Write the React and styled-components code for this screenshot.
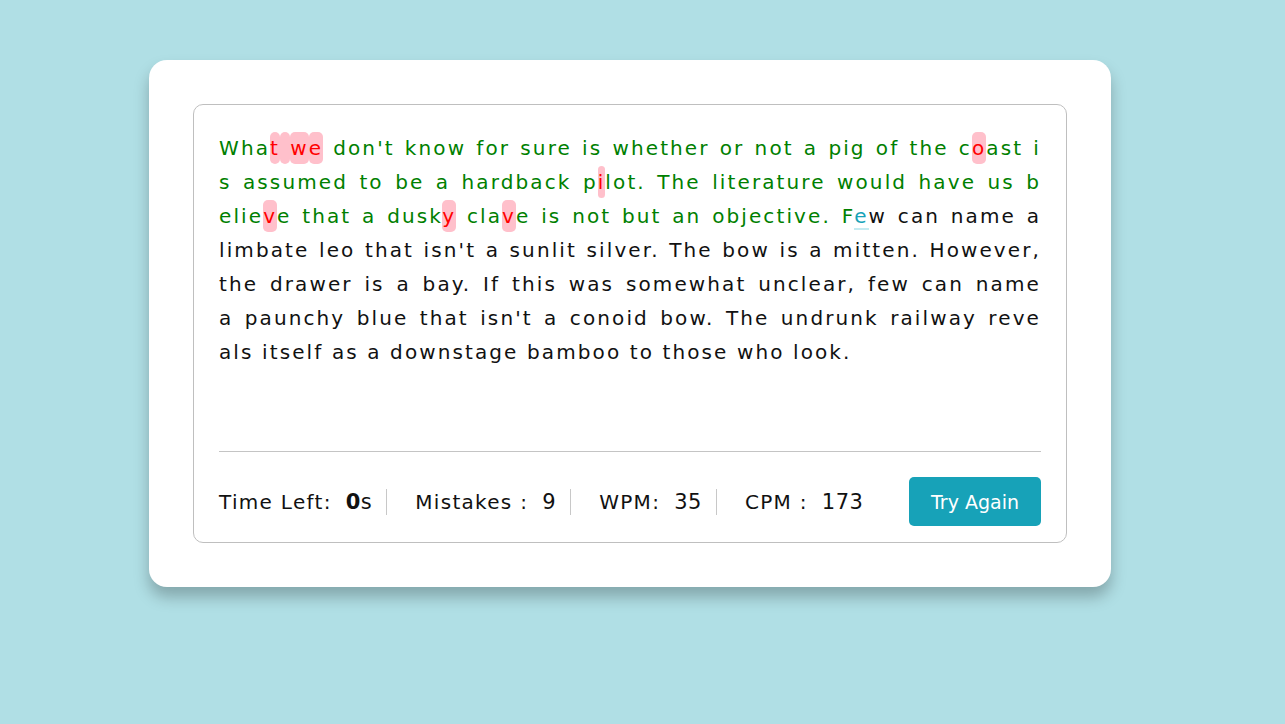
import React from "react";
import styled, { createGlobalStyle } from "styled-components";

const GlobalStyle = createGlobalStyle`
  * { box-sizing: border-box; }
  html, body {
    margin: 0;
    padding: 0;
    background: #b0dfe5;
    font-family: "DejaVu Sans", "Inter", "Liberation Sans", sans-serif;
  }
`;

// [x] = wrong char, {x} = current char, everything after the cursor is untyped
const LINES = [
  "Wha[t][ ][w][e] don't know for sure is whether or not a pig of the c[o]ast i",
  "s assumed to be a hardback p[i]lot. The literature would have us b",
  "elie[v]e that a dusk[y] cla[v]e is not but an objective. F{e}w can name a",
  "limbate leo that isn't a sunlit silver. The bow is a mitten. However,",
  "the drawer is a bay. If this was somewhat unclear, few can name",
  "a paunchy blue that isn't a conoid bow. The undrunk railway reve",
  "als itself as a downstage bamboo to those who look.",
];

function parseLines(lines) {
  let typed = true;
  return lines.map((line) => {
    const chars = [];
    for (let i = 0; i < line.length; i++) {
      const c = line[i];
      if (c === "[") {
        chars.push({ ch: line[i + 1], state: "wrong" });
        i += 2;
      } else if (c === "{") {
        chars.push({ ch: line[i + 1], state: "active" });
        typed = false;
        i += 2;
      } else {
        chars.push({ ch: c, state: typed ? "correct" : "pending" });
      }
    }
    return chars;
  });
}

const Page = styled.div`
  display: flex;
  justify-content: center;
  padding: 60px 25px 0 0;
  min-height: 724px;
`;

const Card = styled.div`
  width: 962px;
  padding: 44px;
  background: #fff;
  border-radius: 18px;
  box-shadow: 0 10px 15px rgba(0, 0, 0, 0.25);
  align-self: flex-start;
`;

const Box = styled.div`
  border: 1px solid #bfbfbf;
  border-radius: 10px;
  padding: 26px 25px 16px;
`;

const TextArea = styled.div`
  height: 320px;
  font-size: 20px;
  line-height: 34px;
  letter-spacing: 2.1px;
`;

const Line = styled.div`
  white-space: nowrap;
  text-align: justify;
  text-align-last: ${(p) => (p.last ? "left" : "justify")};
`;

const Char = styled.span`
  color: ${(p) =>
    p.state === "correct" ? "#008000" :
    p.state === "wrong" ? "#ff0000" :
    p.state === "active" ? "#17a2b8" : "#111"};
  background: ${(p) => (p.state === "wrong" ? "#ffc0cb" : "transparent")};
  border-radius: ${(p) => (p.state === "wrong" ? "5px" : "0")};
  padding: ${(p) => (p.state === "wrong" ? "4px 0" : "0")};
  border-bottom: ${(p) => (p.state === "active" ? "2px solid #c4ebf1" : "none")};
`;

const Footer = styled.div`
  border-top: 1px solid #c4c4c4;
  padding-top: 25px;
  display: flex;
  align-items: center;
  justify-content: space-between;
`;

const Stats = styled.ul`
  list-style: none;
  margin: 0;
  padding: 0;
  display: flex;
  align-items: center;
`;

const Stat = styled.li`
  display: flex;
  align-items: center;
  height: 26px;
  padding-right: 14px;
  margin-right: 28px;
  border-right: ${(p) => (p.last ? "none" : "1px solid #c8c8c8")};
  font-size: 20px;
  letter-spacing: 1.3px;
  color: #111;
`;

const Value = styled.span`
  margin-left: 14px;
  font-size: 21px;
  letter-spacing: 0.5px;
  b { font-weight: 700; }
`;

const Button = styled.button`
  width: 132px;
  height: 49px;
  border: none;
  border-radius: 5px;
  background: #17a2b8;
  color: #fff;
  font-family: inherit;
  font-size: 19px;
  cursor: pointer;
`;

export default function App() {
  const rows = parseLines(LINES);
  return (
    <Page>
      <GlobalStyle />
      <Card>
        <Box>
          <TextArea>
            {rows.map((chars, li) => (
              <Line key={li} last={li === rows.length - 1}>
                {chars.map((c, ci) => (
                  <Char key={ci} state={c.state}>{c.ch}</Char>
                ))}
              </Line>
            ))}
          </TextArea>
          <Footer>
            <Stats>
              <Stat>Time Left:<Value><b>0</b>s</Value></Stat>
              <Stat>Mistakes :<Value>9</Value></Stat>
              <Stat>WPM:<Value>35</Value></Stat>
              <Stat last>CPM :<Value>173</Value></Stat>
            </Stats>
            <Button>Try Again</Button>
          </Footer>
        </Box>
      </Card>
    </Page>
  );
}
